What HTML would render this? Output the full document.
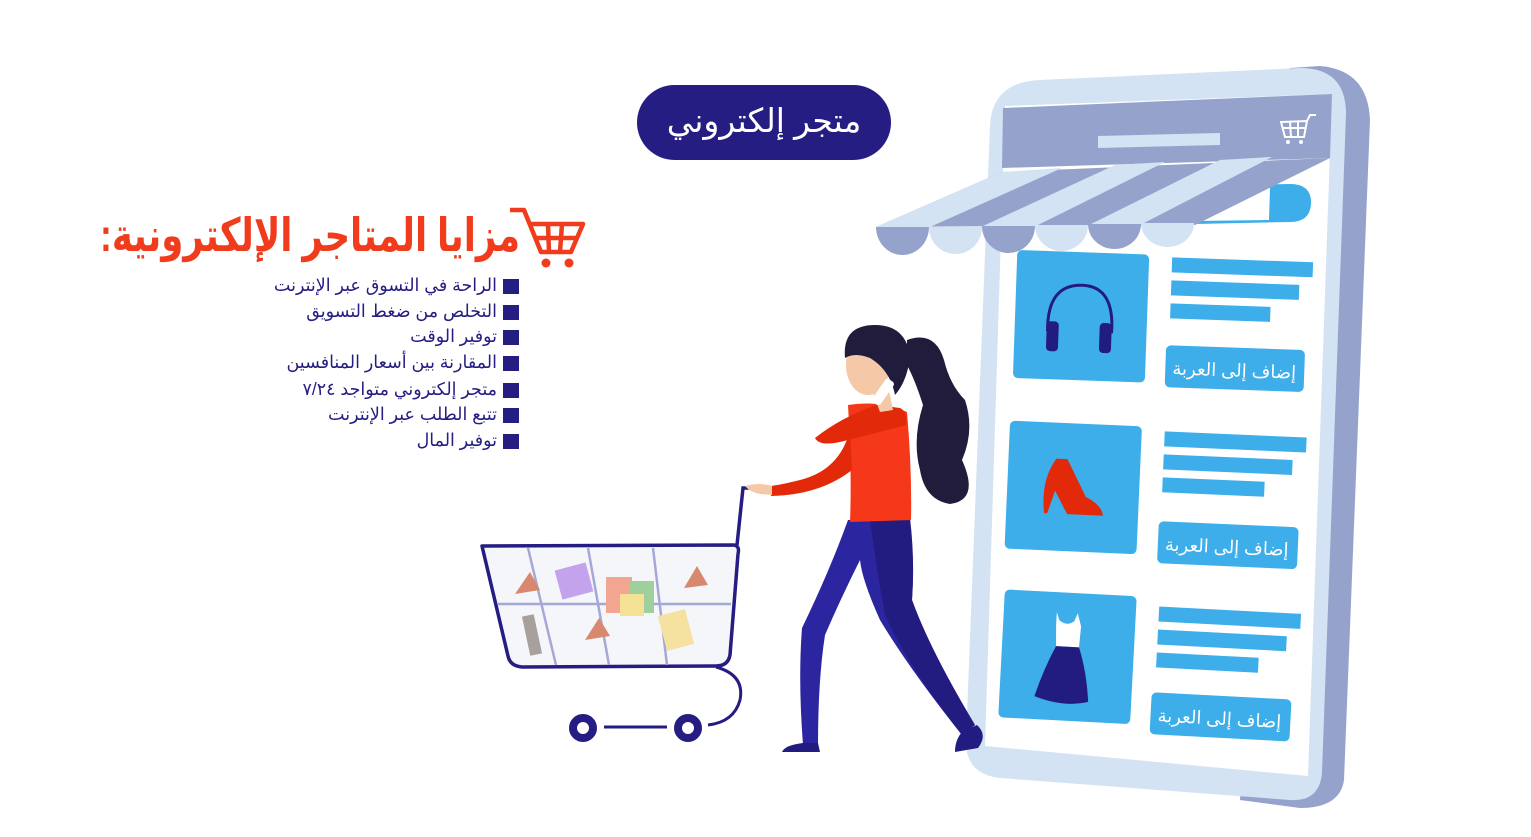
<!DOCTYPE html>
<html lang="ar"><head><meta charset="utf-8">
<style>
html,body{margin:0;padding:0;background:#fff;width:1531px;height:837px;overflow:hidden}
svg text{font-family:"Liberation Sans","DejaVu Sans",sans-serif}
</style></head><body>
<svg width="1531" height="837" viewBox="0 0 1531 837" xmlns="http://www.w3.org/2000/svg">
<!-- phone back -->
<path d="M1290 68 L1320 66 Q1368 70 1370 120 L1344 780 Q1340 808 1300 808 L1240 800 Z" fill="#95a3cc"/>
<!-- phone front -->
<path d="M1040 80 L1300 68 Q1346 68 1346 114 L1322 772 Q1320 802 1290 800 L1000 778 Q965 774 966 740 L990 126 Q992 82 1040 80 Z" fill="#d3e3f3"/>
<!-- screen -->
<path d="M1005 106 L1332 94 L1308 776 L985 746 Z" fill="#fff"/>
<!-- header band -->
<path d="M1003 108 L1332 94 L1330 158 L1002 168 Z" fill="#95a3cc"/>
<path d="M1098 136 L1220 133 L1220 145 L1098 148 Z" fill="#d3e3f3"/>
<!-- mini cart -->
<g fill="none" stroke="#fff" stroke-width="2">
<path d="M1281 122 L1307 121 L1304 137 L1285 137 Z"/><path d="M1307 121 L1310 115 L1316 115"/>
<path d="M1282 128 L1306 128 M1290 122 L1291 137 M1298 122 L1298 137"/>
</g>
<circle cx="1288" cy="142" r="2" fill="#fff"/><circle cx="1301" cy="142" r="2" fill="#fff"/>
<!-- search bar -->
<path d="M1190 186 L1290 184 Q1312 184 1311 204 Q1310 222 1290 222 L1195 224 Z" fill="#3daee9"/>
<path d="M1190 189 L1270 188 L1269 220 L1195 221 Z" fill="#fff"/>
<!-- awning -->
<path d="M876 227 L1002 172 L1330 158 L1195 225 Z" fill="#95a3cc"/>
<path d="M876 227 L1002 172 L1062 168 L930 227 Z" fill="#d3e3f3"/>
<path d="M983 226 L1115 165 L1165 162 L1036 226 Z" fill="#d3e3f3"/>
<path d="M1089 225 L1220 160 L1272 157 L1142 224 Z" fill="#d3e3f3"/>
<g>
<path d="M876 227 A26.5 28 0 0 0 929 227 Z" fill="#95a3cc"/>
<path d="M929 227 A26.5 27 0 0 0 982 227 Z" fill="#d3e3f3"/>
<path d="M982 226 A26.5 27 0 0 0 1035 226 Z" fill="#95a3cc"/>
<path d="M1035 225 A26.5 26 0 0 0 1088 225 Z" fill="#d3e3f3"/>
<path d="M1088 224 A26.5 25 0 0 0 1141 224 Z" fill="#95a3cc"/>
<path d="M1141 223 A26.5 24 0 0 0 1194 223 Z" fill="#d3e3f3"/>
</g>
<!-- product rows -->
<g transform="rotate(2 1160 320)">
<rect x="1015" y="255" width="132" height="128" rx="5" fill="#3daee9"/>
<rect x="1170" y="257" width="141" height="15" fill="#3daee9"/>
<rect x="1170" y="280" width="128" height="15" fill="#3daee9"/>
<rect x="1170" y="303" width="100" height="15" fill="#3daee9"/>
<rect x="1167" y="345" width="139" height="42" rx="5" fill="#3daee9"/>
<text x="1236" y="374" font-size="18" fill="#fff" text-anchor="middle" direction="rtl">إضاف إلى العربة</text>
<path d="M1048 335 Q1046 288 1081 288 Q1114 288 1112 335" fill="none" stroke="#231c80" stroke-width="3"/>
<rect x="1047" y="325" width="12" height="30" rx="4" fill="#231c80"/>
<rect x="1100" y="325" width="12" height="30" rx="4" fill="#231c80"/>
</g>
<g transform="rotate(2.5 1155 495)">
<rect x="1007" y="427" width="132" height="128" rx="5" fill="#3daee9"/>
<rect x="1162" y="431" width="142" height="15" fill="#3daee9"/>
<rect x="1162" y="454" width="129" height="15" fill="#3daee9"/>
<rect x="1162" y="477" width="102" height="15" fill="#3daee9"/>
<rect x="1160" y="521" width="140" height="42" rx="5" fill="#3daee9"/>
<text x="1229" y="550" font-size="18" fill="#fff" text-anchor="middle" direction="rtl">إضاف إلى العربة</text>
<path d="M1055 463 L1066 463 L1086 500 Q1102 507 1104 518 L1068 518 L1055 495 L1048 518 L1045 518 Q1040 485 1055 463 Z" fill="#e22a0a"/>
</g>
<g transform="rotate(3 1148 668)">
<rect x="1001" y="597" width="132" height="128" rx="5" fill="#3daee9"/>
<rect x="1156" y="606" width="142" height="15" fill="#3daee9"/>
<rect x="1156" y="629" width="129" height="15" fill="#3daee9"/>
<rect x="1156" y="652" width="102" height="15" fill="#3daee9"/>
<rect x="1153" y="692" width="140" height="42" rx="5" fill="#3daee9"/>
<text x="1222" y="721" font-size="18" fill="#fff" text-anchor="middle" direction="rtl">إضاف إلى العربة</text>
<path d="M1054 617 L1057 625 Q1065 631 1072 625 L1075 617 L1079 630 L1078 651 L1055 651 L1054 630 Z" fill="#fff"/>
<path d="M1055 651 L1078 651 Q1087 675 1090 705 Q1066 712 1036 702 Q1044 674 1055 651 Z" fill="#231c80"/>
</g>
<!-- title pill -->
<rect x="637" y="85" width="254" height="75" rx="37.5" fill="#251d82"/>
<text x="764" y="132" font-size="33" fill="#fff" text-anchor="middle" direction="rtl">متجر إلكتروني</text>
<!-- heading -->
<text x="520" y="251" font-size="46" font-weight="bold" fill="#f03c1c" text-anchor="start" direction="rtl" textLength="420" lengthAdjust="spacingAndGlyphs">مزايا المتاجر الإلكترونية:</text>
<g fill="none" stroke="#f03c1c" stroke-width="4.5" stroke-linejoin="round">
<path d="M510 210 L524 210 L541 252 L571 252 L583 224 L530 224"/>
<path d="M536 238 L577 238 M548 224 L549 252 M562 224 L560 252"/>
</g>
<circle cx="546" cy="263" r="4.5" fill="#f03c1c"/><circle cx="569" cy="263" r="4.5" fill="#f03c1c"/>
<!-- list -->
<g font-size="17.5" fill="#251d82" text-anchor="start" direction="rtl">
<text x="497" y="291">الراحة في التسوق عبر الإنترنت</text>
<text x="497" y="317">التخلص من ضغط التسويق</text>
<text x="497" y="342">توفير الوقت</text>
<text x="497" y="368">المقارنة بين أسعار المنافسين</text>
<text x="497" y="395">متجر إلكتروني متواجد ٧/٢٤</text>
<text x="497" y="420">تتبع الطلب عبر الإنترنت</text>
<text x="497" y="446">توفير المال</text>
</g>
<g fill="#251d82">
<rect x="503" y="279" width="16" height="15"/><rect x="503" y="305" width="16" height="15"/>
<rect x="503" y="330" width="16" height="15"/><rect x="503" y="356" width="16" height="15"/>
<rect x="503" y="383" width="16" height="15"/><rect x="503" y="408" width="16" height="15"/>
<rect x="503" y="434" width="16" height="15"/>
</g>
<!-- shopping cart -->
<path d="M482 546 L734 545 Q740 546 738 554 L730 655 Q728 666 716 666 L522 667 Q510 666 508 656 Z" fill="#f5f6f9" stroke="#251d82" stroke-width="3.5" stroke-linejoin="round"/>
<g stroke="#a5a8d6" stroke-width="2.5">
<path d="M498 604 L731 604"/><path d="M528 548 L556 665"/><path d="M588 548 L609 665"/><path d="M653 548 L667 665"/>
</g>
<rect x="558" y="566" width="32" height="30" fill="#c2a3ec" transform="rotate(-15 574 581)"/>
<rect x="606" y="577" width="26" height="36" fill="#f2a590"/>
<rect x="630" y="581" width="24" height="32" fill="#9fcf9c"/>
<rect x="620" y="594" width="24" height="22" fill="#f5e196"/>
<rect x="662" y="612" width="28" height="36" fill="#f5e1a0" transform="rotate(-15 676 630)"/>
<rect x="526" y="615" width="12" height="40" fill="#a8a09c" transform="rotate(-12 532 635)"/>
<path d="M515 594 L530 572 L540 590 Z M684 588 L697 566 L708 585 Z M585 640 L599 618 L610 636 Z" fill="#d98870"/>
<path d="M737 545 L743 488 L762 488" fill="none" stroke="#251d82" stroke-width="3.5"/>
<path d="M716 667 Q745 675 740 700 Q734 722 708 725" fill="none" stroke="#251d82" stroke-width="3"/>
<path d="M604 727 L667 727" stroke="#251d82" stroke-width="3"/>
<circle cx="583" cy="728" r="10" fill="#fff" stroke="#251d82" stroke-width="8"/>
<circle cx="688" cy="728" r="10" fill="#fff" stroke="#251d82" stroke-width="8"/>
<!-- woman -->
<path d="M907 340 Q935 330 944 360 Q950 385 965 400 Q975 430 962 460 Q980 500 950 504 Q925 500 920 470 Q912 440 923 405 Q915 380 907 365 Z" fill="#211c3c"/>
<path d="M848 520 L905 518 Q915 560 912 600 Q930 650 975 725 L962 735 Q910 670 880 620 Q862 580 860 560 Q840 600 825 635 Q818 680 818 745 L803 745 Q798 680 802 628 Q830 570 848 520 Z" fill="#2b259f"/>
<path d="M870 520 L910 518 Q915 560 912 600 Q930 650 975 725 L962 735 Q910 670 885 615 Q875 560 870 520 Z" fill="#231c80"/>
<path d="M803 743 L818 743 L820 752 L782 752 Q785 745 803 743 Z" fill="#231c80"/>
<path d="M962 732 L977 725 Q988 735 978 748 L955 752 Q955 740 962 732 Z" fill="#231c80"/>
<path d="M848 405 Q880 400 907 412 Q912 470 911 520 L850 522 Q852 470 848 405 Z" fill="#f5371a"/>
<path d="M850 430 Q840 470 800 480 Q780 485 770 486 L771 496 Q820 495 852 470 Z" fill="#e22a0a"/>
<path d="M745 486 Q760 482 772 486 L772 495 L760 494 Q750 492 745 486 Z" fill="#f5c9a8"/>
<path d="M876 405 Q840 418 815 438 Q820 448 848 440 Q880 432 906 425 Q908 412 900 408 Z" fill="#e22a0a"/>
<ellipse cx="868" cy="365" rx="22" ry="30" fill="#f5c9a8"/>
<path d="M872 390 L880 412 L893 410 L888 385 Z" fill="#f5c9a8"/>
<path d="M845 358 Q842 325 875 325 Q905 325 910 355 Q908 380 895 395 Q890 370 870 358 Q855 352 845 358 Z" fill="#211c3c"/>
<rect x="878" y="378" width="10" height="28" rx="3" fill="#fff" transform="rotate(35 883 392)"/>
</svg>
</body></html>
